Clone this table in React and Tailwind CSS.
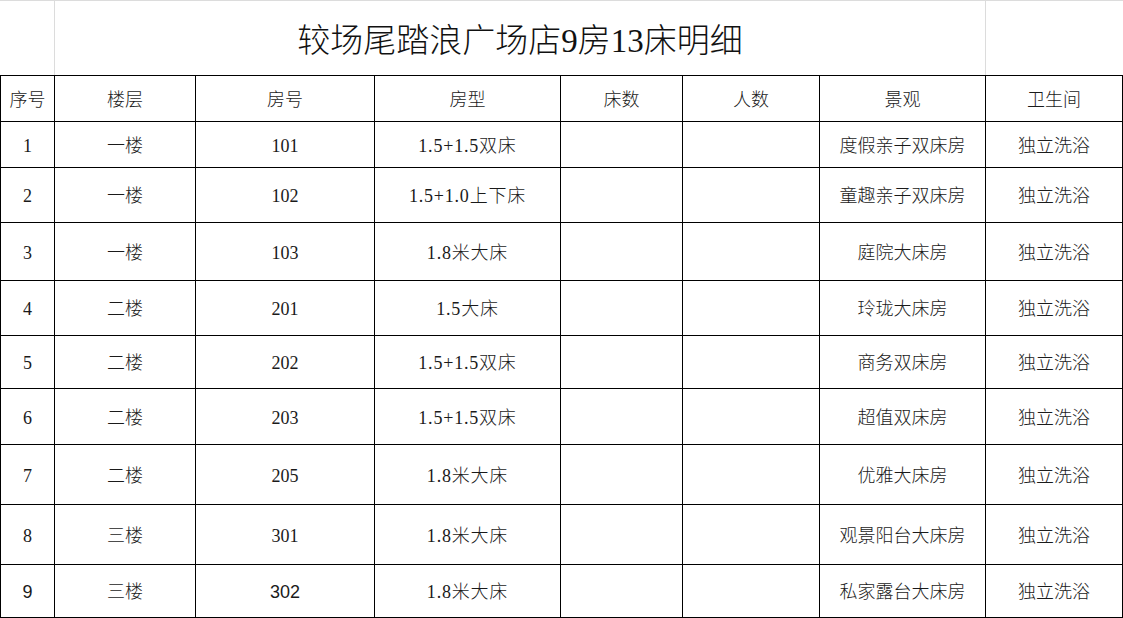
import React from 'react';

const rows = [
    ['1', '一楼', '101', '1.5+1.5双床', '度假亲子双床房'],
    ['2', '一楼', '102', '1.5+1.0上下床', '童趣亲子双床房'],
    ['3', '一楼', '103', '1.8米大床', '庭院大床房'],
    ['4', '二楼', '201', '1.5大床', '玲珑大床房'],
    ['5', '二楼', '202', '1.5+1.5双床', '商务双床房'],
    ['6', '二楼', '203', '1.5+1.5双床', '超值双床房'],
    ['7', '二楼', '205', '1.8米大床', '优雅大床房'],
    ['8', '三楼', '301', '1.8米大床', '观景阳台大床房'],
    ['9', '三楼', '302', '1.8米大床', '私家露台大床房'],
];

const headers = ['序号', '楼层', '房号', '房型', '床数', '人数', '景观', '卫生间'];

const Cell = ({ children, sans, wide }) => (
    <div
        className={`bg-white flex items-center justify-center pt-[3px] text-[18px] text-[#1a1a1a] whitespace-nowrap ${
            sans ? "font-['Liberation_Sans','Noto_Sans_CJK_SC',sans-serif]" : ''
        } ${wide ? 'tracking-[0.8px]' : ''}`}
    >
        {children}
    </div>
);

export default function App() {
    return (
        <div className="w-[1123px] h-[618px] bg-white overflow-hidden font-['Liberation_Serif','Noto_Sans_CJK_SC',serif] font-light">
            {/* Title row (sheet gridlines only) */}
            <div className="flex h-[75px] border-t border-[#dcdcdc]">
                <div className="w-[55px] border-r border-[#dcdcdc]" />
                <div className="w-[930px] flex items-center justify-center pt-[8px] text-[33px] text-[#111] whitespace-nowrap">
                    较场尾踏浪广场店9房13床明细
                </div>
                <div className="flex-1 border-l border-[#dcdcdc]" />
            </div>

            {/* Table */}
            <div className="grid bg-black gap-px p-px grid-cols-[53px_140px_178px_185px_121px_136px_165px_136px] grid-rows-[45px_45px_54px_57px_54px_52px_55px_59px_59px_52px]">
                {headers.map((h) => (
                    <Cell key={h}>{h}</Cell>
                ))}
                {rows.map((r, i) => {
                    const last = i === rows.length - 1;
                    return (
                        <React.Fragment key={r[0]}>
                            <Cell sans={last}>{r[0]}</Cell>
                            <Cell>{r[1]}</Cell>
                            <Cell sans={last}>{r[2]}</Cell>
                            <Cell wide>{r[3]}</Cell>
                            <Cell />
                            <Cell />
                            <Cell>{r[4]}</Cell>
                            <Cell>独立洗浴</Cell>
                        </React.Fragment>
                    );
                })}
            </div>
        </div>
    );
}
